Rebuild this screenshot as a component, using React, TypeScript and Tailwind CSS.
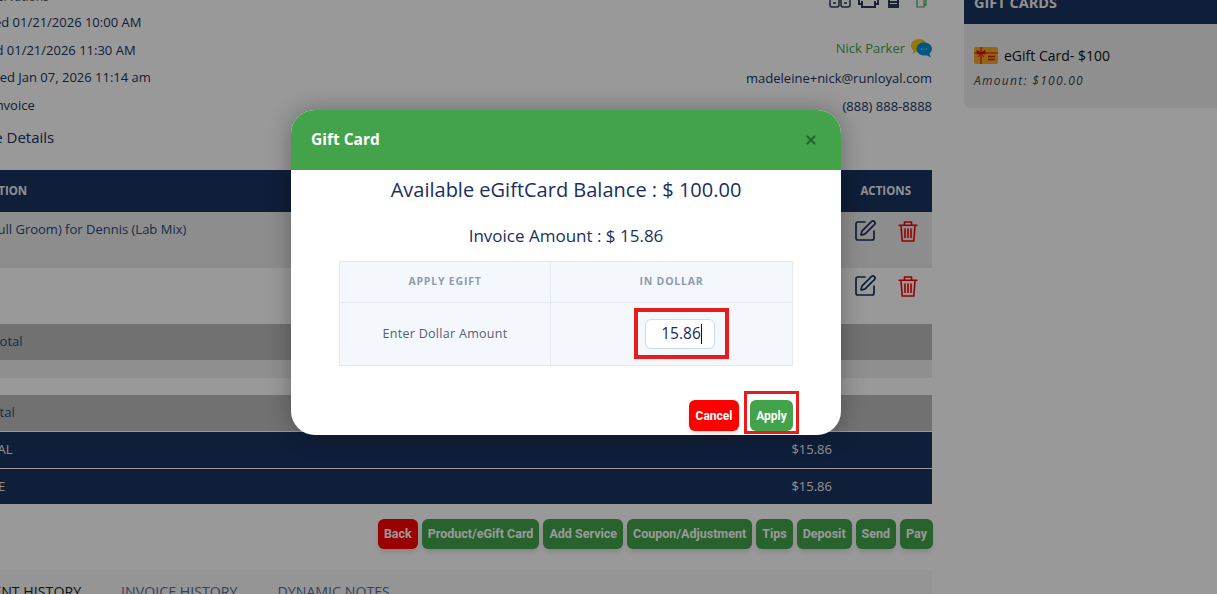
import React from 'react';
import { SquarePen, X } from 'lucide-react';

const toolbarButtons = ['Product/eGift Card', 'Add Service', 'Coupon/Adjustment', 'Tips', 'Deposit', 'Send', 'Pay'];

const ChatIcon = () => (
  <svg width="21" height="19" viewBox="0 0 21 19" className="ml-[6px] shrink-0">
    <path d="M8 0c4.4 0 8 2.900 8 6.500S12.400 13 8 13c-1 0-2 0-2.800-.3L1.500 15l1-3.500C1 10.300 0 8.500 0 6.500 0 2.900 3.600 0 8 0z" fill="#f5c518" />
    <path d="M13 3.500c4.400 0 8 2.700 8 6.300 0 1.900-1 3.500-2.500 4.700l1.500 4-4.500-2.300c-.8.2-1.600.3-2.500.3-4.400 0-7.500-3-7.500-6.700s3.100-6.300 7.500-6.300z" fill="#0a8fd8" />
    <circle cx="10.500" cy="10" r=".6" fill="#fff" />
    <circle cx="13" cy="10" r=".6" fill="#fff" />
    <circle cx="15.500" cy="10" r=".6" fill="#fff" />
  </svg>
);

const GiftIcon = () => (
  <svg width="24" height="17" viewBox="0 0 24 17" className="shrink-0">
    <rect width="24" height="17" rx="2" fill="#f7a823" />
    <path d="M0 6h24M7 0v17" stroke="#e01010" strokeWidth="1.200" />
    <path d="M7 6 3 3.500 3 7zM7 6l4-2.500V7zM7 6l-3 4M7 6l3 4" fill="#e01010" stroke="#e01010" />
    <path d="M14 9.500h7M14 12.500h7" stroke="#e01010" strokeWidth="1.500" />
  </svg>
);

const TrashIcon = () => (
  <svg width="20" height="21" viewBox="0 0 20 21" fill="none" stroke="#ff0000" strokeWidth="1.600" className="shrink-0">
    <path d="M.5 4.200h19M6.500 4V1h7v3M3 4.500l1.200 15.500h11.600L17 4.500M7 7.500v9.500M10 7.500v9.500M13 7.500v9.500" />
  </svg>
);

const ActionIcons = () => (
  <div className="flex items-start gap-[21px] pt-[7px]">
    <SquarePen size={24} strokeWidth={1.7} className="text-[#1a3360]" />
    <div className="pt-[2px]"><TrashIcon /></div>
  </div>
);

export default function App() {
  return (
    <div className="relative h-[594px] w-[1217px] overflow-hidden bg-white font-['Open_Sans',sans-serif] text-[#1a3360]">
      <div className="flex h-full items-start -mt-[16px] -ml-[60px]">
        {/* main column */}
        <div className="w-[992px] shrink-0">
          <div className="flex justify-between">
            <div className="text-[13px] font-medium leading-[27.6px]">
              <div className="pl-[37px] text-[12px] leading-[25px] text-[#555]">Reservations</div>
              <div className="pl-[25px]">Started 01/21/2026 10:00 AM</div>
              <div className="pl-[25px]">Ended 01/21/2026 11:30 AM</div>
              <div className="pl-[27px]">Created Jan 07, 2026 11:14 am</div>
              <div className="pl-[52px]">Invoice</div>
              <div className="pl-[13px] pt-[4px] text-[15px] leading-[28px]">Service Details</div>
            </div>
            <div className="flex flex-col items-end text-[13px] font-medium">
              <div className="flex h-[24px] items-end gap-[7px] pr-[5px] text-[#333]">
                <svg width="22" height="14" viewBox="0 0 22 14" fill="none" stroke="#2f3a55" strokeWidth="1.500">
                  <rect x="1" y="1" width="9" height="12" rx="2" />
                  <rect x="12" y="1" width="9" height="12" rx="2" />
                  <path d="M4 9h3M15 9h3" />
                </svg>
                <svg width="21" height="14" viewBox="0 0 21 14" fill="none" stroke="#2f3a55" strokeWidth="2">
                  <path d="M1 4h19v6h-3M1 4v6h3M4 7v6h13V7" />
                </svg>
                <svg width="11" height="14" viewBox="0 0 11 14" fill="#2f3a55" className="ml-[2px]">
                  <path d="M0 0h11v14H0zM2 6v1h7V6zM2 9v1h7V9z" fillRule="evenodd" />
                </svg>
                <svg width="11" height="14" viewBox="0 0 11 14" fill="none" stroke="#3fa34d" strokeWidth="1.200" className="ml-[10px]">
                  <path d="M1 2v11h7V2zM3 2V.500h7V11H8" />
                </svg>
              </div>
              <div className="flex h-[50px] items-end font-normal text-[#43a34b]">
                Nick Parker
                <ChatIcon />
              </div>
              <div className="pt-[8px] leading-[24px]">madeleine+nick@runloyal.com</div>
              <div className="pt-[4px] leading-[24px]">(888) 888-8888</div>
            </div>
          </div>

          {/* line items */}
          <div className="mt-[19px] flex h-[42px] items-center justify-between bg-[#1a3360] pb-[2px] text-[11.500px] font-bold uppercase text-[#f0f0f0]">
            <span className="pl-[11px]">Description</span>
            <span className="pr-[21px]">Actions</span>
          </div>
          <div className="flex h-[56px] justify-between bg-[#ebebeb]">
            <span className="pl-[47px] pt-[8px] text-[13px] text-[#1f4b7d]">(Full Groom) for Dennis (Lab Mix)</span>
            <div className="w-[79px]"><ActionIcons /></div>
          </div>
          <div className="flex h-[56px] justify-end bg-white">
            <div className="-mt-[1px] w-[79px]"><ActionIcons /></div>
          </div>
          <div className="flex h-[36px] items-center bg-[#bcbcbc] pb-[2px] pl-[26px] text-[13px] text-[#1f4b7d]">Sub Total</div>
          <div className="h-[18px] bg-[#eeeeee]" />
          <div className="h-[17px] bg-white" />
          <div className="flex h-[36px] items-center bg-[#bcbcbc] pb-[2px] pl-[20px] text-[13px] text-[#1f4b7d]">Tax Total</div>
          <div className="mt-[1px] flex h-[36px] items-center justify-between bg-[#1a3360] pb-[1px] pl-[33px] pr-[100px] text-[13px] text-[#f0f0f0]">
            <span>TOTAL</span>
            <span>$15.86</span>
          </div>
          <div className="flex h-[36px] items-center justify-between border-t border-[#ffffff] bg-[#1a3360] pb-[1px] pl-[39px] pr-[100px] text-[13px] text-[#f0f0f0]">
            <span>DUE</span>
            <span>$15.86</span>
          </div>

          <div className="-mr-[1px] mt-[15px] flex justify-end gap-[4px] font-['Roboto',sans-serif] text-[12.500px] font-bold text-white">
            <button className="h-[30px] rounded-md bg-[#ff0000] px-[6px] shadow-md">Back</button>
            {toolbarButtons.map(label => (
              <button key={label} className="h-[30px] rounded-md bg-[#43a34b] px-[6px] shadow-md">
                {label}
              </button>
            ))}
          </div>

          <div className="mt-[21px] flex h-[60px] items-start gap-[40px] bg-[#f8f8f8] pt-[11px] text-[14.200px] uppercase text-[#5f7090]">
            <span className="-ml-[19px] text-[#222]">Appointment History</span>
            <span>Invoice History</span>
            <span>Dynamic Notes</span>
          </div>
        </div>

        {/* gift cards sidebar */}
        <div className="ml-[32px] w-[260px] shrink-0">
          <div className="flex h-[40px] items-center bg-[#1a3360] pb-[2px] pl-[10px] text-[14.500px] font-bold uppercase text-[#f0f0f0]">
            Gift Cards
          </div>
          <div className="h-[84px] rounded-bl-md bg-[#eeeeee] pl-[10px] pt-[21px]">
            <div className="flex items-center gap-[6px] text-[14px] font-medium text-[#111]">
              <GiftIcon />
              eGift Card- $100
            </div>
            <div className="pt-[6px] text-[12px] italic tracking-[1.300px] text-[#444]">Amount: $100.00</div>
          </div>
        </div>
      </div>

      {/* modal */}
      <div className="absolute inset-0 bg-black/40">
        <div className="ml-[291px] mt-[110px] h-[325px] w-[550px] overflow-hidden rounded-[24px] bg-white shadow-[0_0_24px_rgba(0,0,0,0.3)]">
          <div className="flex h-[60px] items-center justify-between bg-[#43a34b] pb-[1px] pl-[20px] pr-[23px]">
            <span className="text-[15.500px] font-bold text-white">Gift Card</span>
            <X size={14} strokeWidth={3.5} className="text-[#2a622e]" />
          </div>
          <div className="pt-[6px] text-center text-[#1a3060]">
            <div className="text-[20px] font-medium leading-[28px]">Available eGiftCard Balance : $ 100.00</div>
            <div className="pt-[20px] text-[17px] font-medium leading-[24px]">Invoice Amount : $ 15.86</div>
          </div>
          <div className="ml-[48px] mt-[13px] w-[454px] border border-[#e4eaf0] bg-[#f4f7fb]">
            <div className="flex h-[41px] items-center border-b border-[#e4eaf0] text-center text-[10.500px] font-bold uppercase tracking-[0.8px] text-[#8f9bb0]">
              <div className="flex h-full w-[211px] items-center justify-center border-r border-[#e4eaf0]">Apply eGift</div>
              <div className="flex-1">In Dollar</div>
            </div>
            <div className="flex h-[62px] items-start text-center">
              <div className="flex h-full w-[211px] items-center justify-center border-r border-[#e4eaf0] text-[12.500px] tracking-[0.3px] text-[#55607a]">
                Enter Dollar Amount
              </div>
              <div className="ml-[83px] mt-[5px] border-[4px] border-[#e81c1c] pb-[6px] pl-[7px] pr-[10px] pt-[7px]">
                <div className="flex h-[30px] w-[70px] items-center justify-center rounded-md border border-[#c5dff0] bg-white pl-[3px] text-[15.500px] text-[#1a2a5a]">
                  15.86<span className="h-[20px] w-px bg-[#111]" />
                </div>
              </div>
            </div>
          </div>
          <div className="flex justify-end gap-[5px] pr-[42px] pt-[25px] font-['Roboto',sans-serif] text-[12px] font-bold text-white">
            <button className="mt-[9px] h-[31px] w-[50px] rounded-md bg-[#ff0000] shadow-md">Cancel</button>
            <div className="border-[3px] border-[#e81c1c] px-[3px] pt-[6px]">
              <button className="h-[31px] w-[43px] rounded-md bg-[#43a34b]">Apply</button>
            </div>
          </div>
        </div>
      </div>
    </div>
  );
}
